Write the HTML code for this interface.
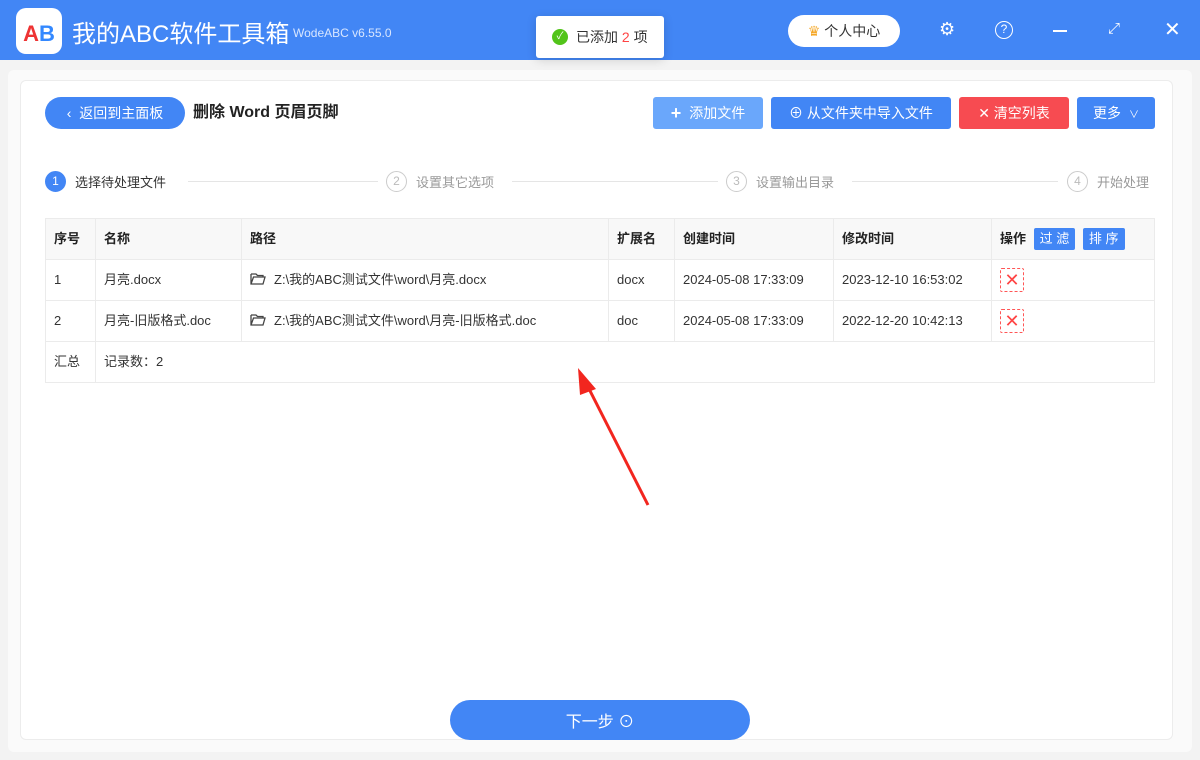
<!DOCTYPE html>
<html><head><meta charset="utf-8"><style>
*{margin:0;padding:0;box-sizing:border-box}
body{width:1200px;height:760px;background:#f3f3f3;font-family:"Liberation Sans","Noto Sans CJK SC",sans-serif;font-size:13px;color:#333;position:relative;overflow:hidden}
.abs{position:absolute}
.top{left:0;top:0;width:1200px;height:60px;background:#4286f5}
.btn{position:absolute;height:32px;border-radius:3px;color:#fff;font-size:14px;display:flex;align-items:center;justify-content:center;gap:8px}
table{position:absolute;left:45px;top:218px;width:1110px;border-collapse:collapse;font-size:13px}
td{border:1px solid #ebebeb;padding:0 8px;height:41px;color:#333;vertical-align:middle;line-height:16px}
tr.h td{background:#f8f8f8;font-weight:bold;color:#222}
.del{display:inline-block;width:24px;height:24px;border:1px dashed #f55;border-radius:2px;color:#f44;text-align:center;line-height:22px;font-size:18px;vertical-align:middle}
.step{position:absolute;top:171px;display:flex;align-items:center;gap:9px;font-size:13px;color:#999}
.c{width:21px;height:21px;border-radius:50%;border:1px solid #ccc;text-align:center;line-height:19px;font-size:12px;color:#bbb}
.line{position:absolute;top:181px;height:1px;background:#e5e5e5}
.fo{display:inline-block;vertical-align:middle;margin-right:8px;position:relative;top:-2px}
</style></head><body>
<div class="abs top"></div>
<div class="abs" style="left:16px;top:8px;width:46px;height:46px;background:#fff;border-radius:10px;font-weight:bold;font-size:22px;text-align:center;line-height:52px"><span style="color:#e33">A</span><span style="color:#38f">B</span></div>
<div class="abs" style="left:72px;top:14px;font-size:24px;color:#fff">我的ABC软件工具箱</div>
<div class="abs" style="left:293px;top:26px;font-size:12px;color:#d8e6ff">WodeABC v6.55.0</div>
<div class="abs" style="left:536px;top:16px;width:128px;height:42px;background:#fff;border-radius:3px;box-shadow:0 2px 10px rgba(0,0,0,.15);display:flex;align-items:center;padding-left:16px;gap:8px;font-size:14px"><span style="width:16px;height:16px;border-radius:50%;background:#52c41a;color:#fff;font-size:10px;text-align:center;line-height:16px">✓</span><span>已添加 <span style="color:#f44">2</span> 项</span></div>
<div class="abs" style="left:788px;top:15px;width:112px;height:32px;background:#fff;border-radius:16px;display:flex;align-items:center;justify-content:center;gap:4px;font-size:14px"><span style="color:#f5a623">♛</span>个人中心</div>
<div class="abs" style="left:939px;top:19px;color:#fff;font-size:18px">⚙</div>
<div class="abs" style="left:995px;top:21px;width:18px;height:18px;border:1.5px solid #fff;border-radius:50%;color:#fff;font-size:12px;text-align:center;line-height:15px">?</div>
<div class="abs" style="left:1053px;top:30px;width:14px;height:1.5px;background:#fff"></div>
<div class="abs" style="left:1108px;top:20px;color:#fff;font-size:15px">⤢</div>
<div class="abs" style="left:1164px;top:17px;color:#fff;font-size:20px">✕</div>
<div class="abs" style="left:8px;top:70px;width:1184px;height:682px;background:#fafafa;border-radius:6px"></div>
<div class="abs" style="left:20px;top:80px;width:1153px;height:660px;background:#fff;border:1px solid #ececec;border-radius:6px"></div>
<div class="btn" style="left:45px;top:97px;width:140px;border-radius:16px;background:#4286f5">‹&nbsp; 返回到主面板</div>
<div class="abs" style="left:193px;top:103px;font-size:16px;font-weight:bold;color:#222;line-height:20px">删除 Word 页眉页脚</div>
<div class="btn" style="left:653px;top:97px;width:110px;background:#6aa7fb"><b style="font-size:18px">+</b>添加文件</div>
<div class="btn" style="left:771px;top:97px;width:180px;background:#4286f5">⊕ 从文件夹中导入文件</div>
<div class="btn" style="left:959px;top:97px;width:110px;background:#f74b51">✕ 清空列表</div>
<div class="btn" style="left:1077px;top:97px;width:78px;background:#4286f5">更多 <span style="font-size:10px">∨</span></div>
<div class="step" style="left:45px;color:#333"><div class="c" style="background:#4286f5;border-color:#4286f5;color:#fff">1</div>选择待处理文件</div>
<div class="line" style="left:188px;width:190px"></div>
<div class="step" style="left:386px"><div class="c">2</div>设置其它选项</div>
<div class="line" style="left:512px;width:206px"></div>
<div class="step" style="left:726px"><div class="c">3</div>设置输出目录</div>
<div class="line" style="left:852px;width:206px"></div>
<div class="step" style="left:1067px"><div class="c">4</div>开始处理</div>
<table>
<tr class="h"><td style="width:50px">序号</td><td style="width:146px">名称</td><td style="width:367px">路径</td><td style="width:66px">扩展名</td><td style="width:159px">创建时间</td><td style="width:158px">修改时间</td><td>操作 <span style="display:inline-block;background:#4286f5;color:#fff;font-weight:normal;padding:3px 6px;border-radius:2px;margin-left:4px">过 滤</span> <span style="display:inline-block;background:#4286f5;color:#fff;font-weight:normal;padding:3px 6px;border-radius:2px;margin-left:4px">排 序</span></td></tr>
<tr><td>1</td><td>月亮.docx</td><td><svg class="fo" width="16" height="13" viewBox="0 0 16 13"><path d="M1 2h5l1.5 1.5H13V5M1 2v10h12l2-7H3.5L1 12" fill="none" stroke="#444" stroke-width="1.3"/></svg>Z:\我的ABC测试文件\word\月亮.docx</td><td>docx</td><td>2024-05-08 17:33:09</td><td>2023-12-10 16:53:02</td><td><span class="del">✕</span></td></tr>
<tr><td>2</td><td>月亮-旧版格式.doc</td><td><svg class="fo" width="16" height="13" viewBox="0 0 16 13"><path d="M1 2h5l1.5 1.5H13V5M1 2v10h12l2-7H3.5L1 12" fill="none" stroke="#444" stroke-width="1.3"/></svg>Z:\我的ABC测试文件\word\月亮-旧版格式.doc</td><td>doc</td><td>2024-05-08 17:33:09</td><td>2022-12-20 10:42:13</td><td><span class="del">✕</span></td></tr>
<tr><td style="height:37px">汇总</td><td colspan="6" style="border-right:1px solid #ebebeb">记录数：2</td></tr>
</table>
<svg class="abs" style="left:570px;top:365px" width="85" height="145"><line x1="78" y1="140" x2="14" y2="14" stroke="#f2261f" stroke-width="3"/><polygon points="8,3 26,24 10,30" fill="#f2261f"/></svg>
<div class="btn" style="left:450px;top:700px;width:300px;height:40px;border-radius:20px;background:#4286f5;font-size:16px">下一步 ⊙</div>
</body></html>
